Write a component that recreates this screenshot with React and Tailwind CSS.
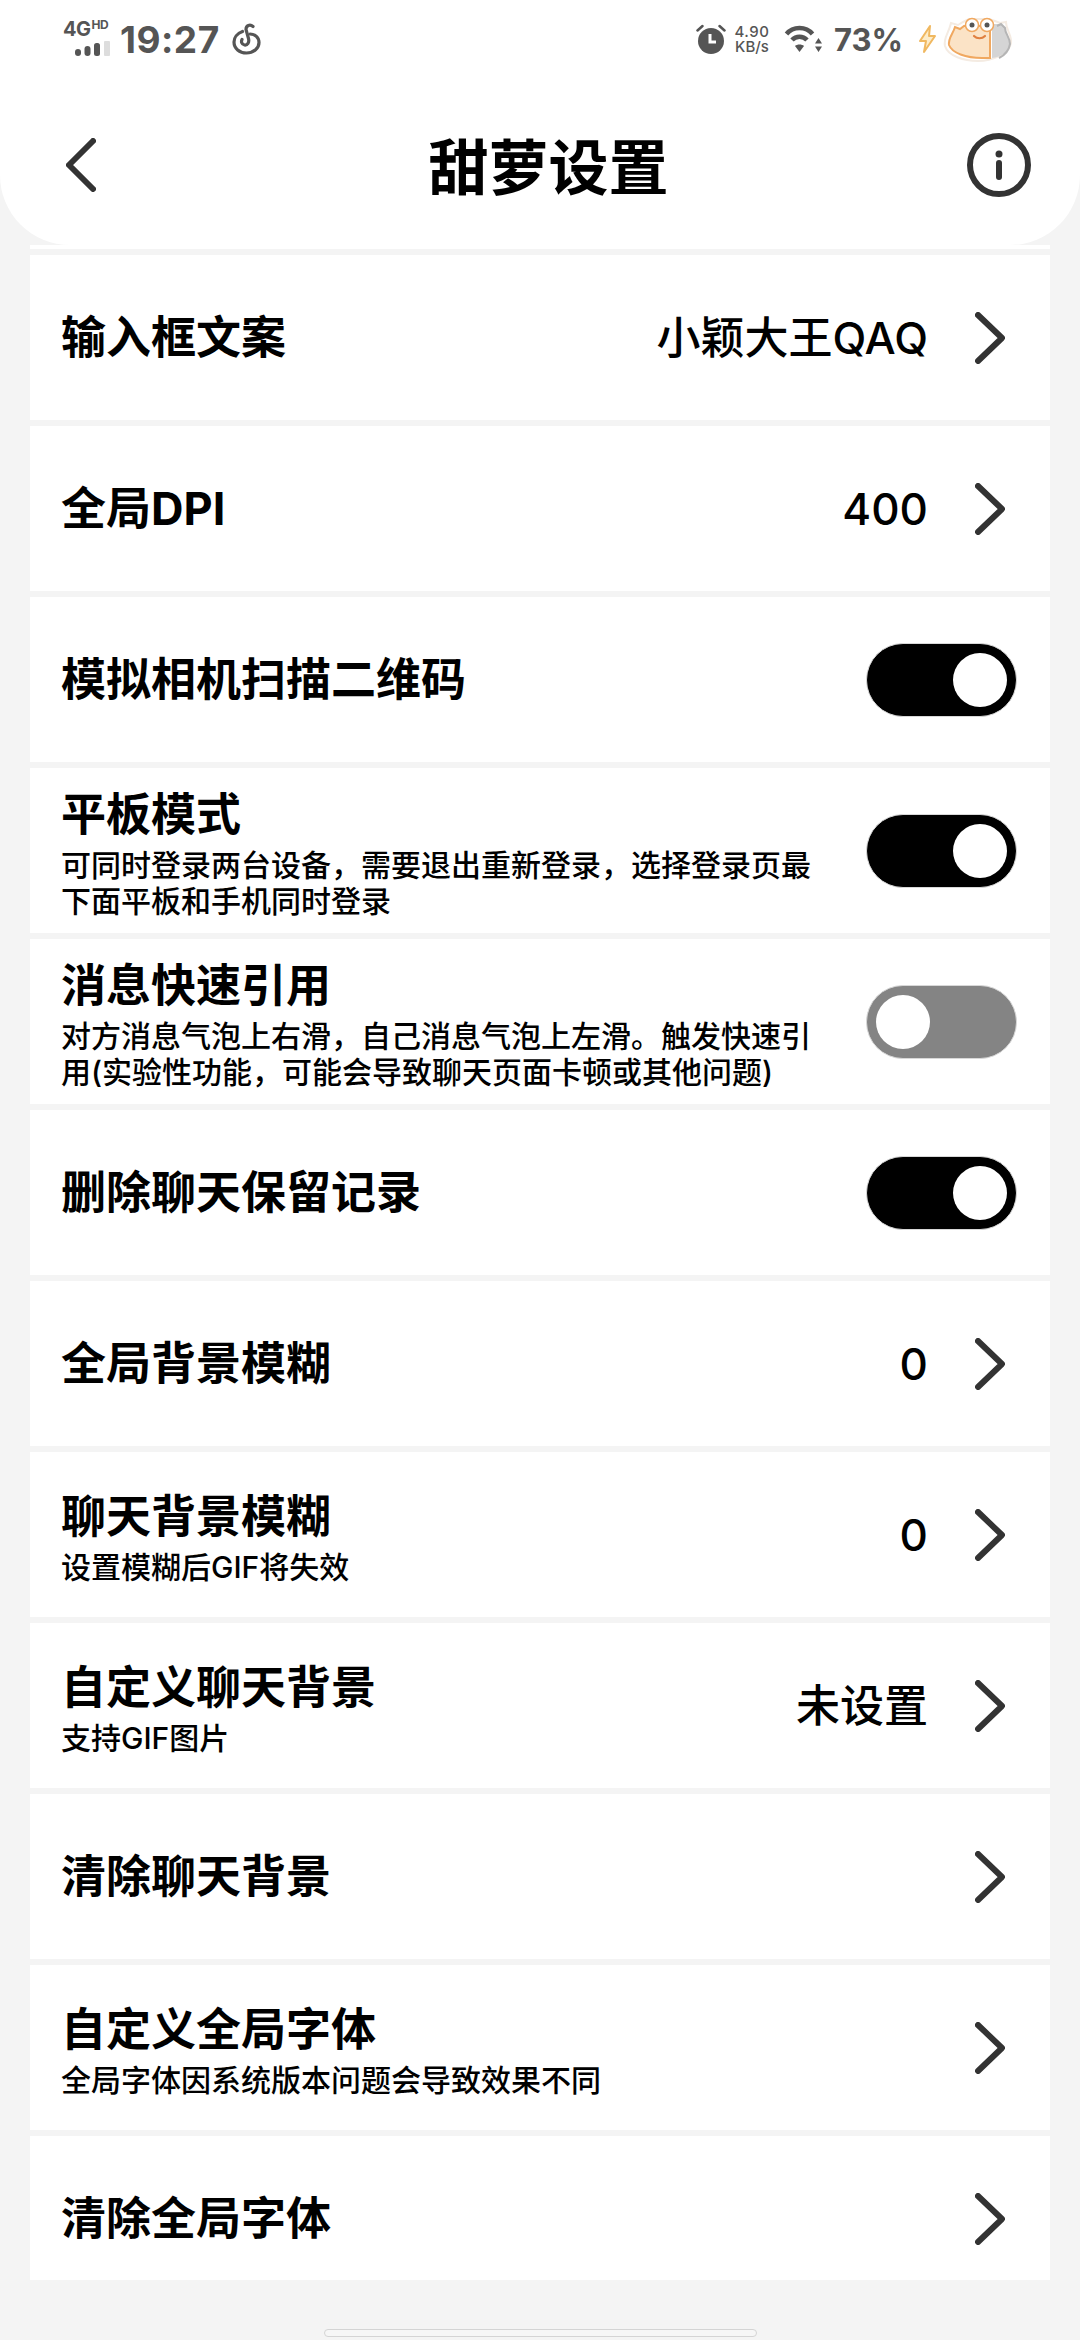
const font = "font-['Inter','Noto_Sans_CJK_SC','Noto_Sans',sans-serif]";

const rows = [
  { title: "输入框文案", value: "小颖大王QAQ" },
  { title: "全局DPI", value: "400" },
  { title: "模拟相机扫描二维码", toggle: true },
  { title: "平板模式", sub: "可同时登录两台设备，需要退出重新登录，选择登录页最下面平板和手机同时登录", toggle: true },
  { title: "消息快速引用", sub: "对方消息气泡上右滑，自己消息气泡上左滑。触发快速引用(实验性功能，可能会导致聊天页面卡顿或其他问题)", toggle: false },
  { title: "删除聊天保留记录", toggle: true },
  { title: "全局背景模糊", value: "0" },
  { title: "聊天背景模糊", sub: "设置模糊后GIF将失效", value: "0" },
  { title: "自定义聊天背景", sub: "支持GIF图片", value: "未设置" },
  { title: "清除聊天背景" },
  { title: "自定义全局字体", sub: "全局字体因系统版本问题会导致效果不同" },
  { title: "清除全局字体" },
];

function Toggle({ on }) {
  return (
    <div
      className={`flex h-[74px] w-[151px] items-center rounded-full border border-[#d8d8d8] px-[9px] ${
        on ? "justify-end bg-black" : "justify-start bg-[#848484]"
      }`}
    >
      <div className="h-[54px] w-[54px] rounded-full bg-white" />
    </div>
  );
}

function Chevron() {
  return (
    <svg className="ml-[47px] mr-[12px] shrink-0" width="30" height="52" viewBox="0 0 30 52" fill="none" stroke="#333" strokeWidth="6" strokeLinecap="round" strokeLinejoin="round">
      <path d="M3 3 27 26 3 49" />
    </svg>
  );
}

function Row({ row }) {
  const hasToggle = row.toggle !== undefined;
  return (
    <div className="mb-[6px] flex h-[165px] shrink-0 items-center bg-white pl-[31px] pr-[33px]">
      <div className="min-w-0 flex-1">
        <div className="text-[45px] font-bold leading-[65px] text-black">{row.title}</div>
        {row.sub && <div className="w-[760px] text-[30px] font-medium leading-[36px] text-black">{row.sub}</div>}
      </div>
      {row.value && <div className="ml-4 text-[44px] font-medium text-black">{row.value}</div>}
      {hasToggle ? <Toggle on={row.toggle} /> : <Chevron />}
    </div>
  );
}

function StatusBar() {
  return (
    <div className="flex h-[78px] items-center justify-between pl-[63px] pr-[62px] text-[#555]">
      <div className="flex items-center">
        <div className="relative h-[34px] w-[47px]">
          <div className="absolute left-0 top-[-4px] text-[20px] font-bold leading-[22px] tracking-[-0.5px]">
            4G<span className="ml-[1px] align-top text-[12px] leading-[14px]">HD</span>
          </div>
          <svg className="absolute bottom-0 left-[12px]" width="35" height="15" viewBox="0 0 35 15">
            <rect x="0" y="8" width="6" height="7" rx="3" fill="#555" />
            <rect x="9.5" y="5" width="6" height="10" rx="3" fill="#555" />
            <rect x="19" y="2" width="6" height="13" rx="2.5" fill="#555" />
            <rect x="29" y="0" width="6" height="15" rx="1" fill="#ddd" />
          </svg>
        </div>
        <span className="ml-[10px] text-[37px] font-bold leading-none tracking-[0.5px]">19:27</span>
        <svg className="ml-[12px]" width="30" height="32" viewBox="0 0 30 32" fill="none" stroke="#555" strokeWidth="3.2" strokeLinecap="round">
          <path d="M10.5 8.5C5 10.5 2 15 2 19c0 6.5 5.5 11 12.5 11C22 30 27 25 27 19.5c0-5-4-8.5-9-8.5" />
          <path d="M21 3.5C18 1 14 2.5 14 6.5l2.5 9c1 4-1 7-4 6.5-3-.5-3.5-3.5-2.5-5.5" />
        </svg>
      </div>
      <div className="flex items-center">
        <svg width="30" height="30" viewBox="0 0 30 30">
          <path d="M1.5 6.5 6.5 2M28.5 6.5 23.5 2" stroke="#555" strokeWidth="2.5" strokeLinecap="round" />
          <circle cx="15" cy="17" r="13" fill="#555" />
          <path d="M14 10v8h6" fill="none" stroke="#fff" strokeWidth="3" />
        </svg>
        <div className="ml-[6px] flex w-[40px] flex-col items-center text-[15px] font-medium leading-[15px]">
          <span className="tracking-[0.5px]">4.90</span>
          <span>KB/s</span>
        </div>
        <svg className="ml-[12px]" width="38" height="30" viewBox="0 0 38 30" fill="none" stroke="#555">
          <path d="M2.5 10C9 2 22 2 28.5 10" strokeWidth="4.5" />
          <path d="M8 16c4-4.500 11-4.500 15 0" strokeWidth="4.5" />
          <path d="M11 22c2-2 7-2 9 0l-4.500 6z" fill="#555" stroke="none" />
          <path d="M34.500 14l3.500 5.500h-7zM34.500 28l3.500-5.500h-7z" fill="#555" stroke="none" />
        </svg>
        <span className="ml-[12px] text-[31px] font-bold leading-none">73%</span>
        <svg className="ml-[15px]" width="20" height="30" viewBox="0 0 20 30" fill="#fdecc8" stroke="#f0b860" strokeWidth="2" strokeLinejoin="round">
          <path d="M12 2 2 17h6l-2 11 11-16h-6z" />
        </svg>
        <svg className="ml-[4px]" width="76" height="48" viewBox="0 0 76 48">
          <path d="M3 31C1 23 7 18 9 8l7 2 5-3 6-3h20l6 2 5 2 6-1c0 8 6 13 5 21-2 11-19 18-33 18S6 41 3 31z" fill="#fff" stroke="#f4ebe2" strokeWidth="2" />
          <path d="M7 30c-1-7 4-11 6-18l5 2 4-3h26v32H40C24 43 10 38 7 30z" fill="#fbe3c6" stroke="#f0a860" strokeWidth="2" />
          <path d="M50 9h9l4 4c0 6 5 9 5 16-1 8-9 13-18 14z" fill="#d5d5d5" />
          <path d="M57 43c6-3 10-8 11-14 0-7-5-10-5-16l-4-4-4 2" fill="none" stroke="#b5b5b5" strokeWidth="2" />
          <circle cx="30" cy="10" r="6.500" fill="#fff" stroke="#f0a860" strokeWidth="1.500" />
          <circle cx="45" cy="10" r="6.500" fill="#fff" stroke="#f0a860" strokeWidth="1.500" />
          <circle cx="30" cy="10" r="2.500" fill="#555" />
          <circle cx="45" cy="10" r="2.500" fill="#555" />
          <path d="M32 21c3 3 8 3 11 0" fill="none" stroke="#e08040" strokeWidth="2.200" strokeLinecap="round" />
        </svg>
      </div>
    </div>
  );
}

export default function App() {
  return (
    <div className={`flex h-[2340px] w-[1080px] flex-col overflow-hidden bg-[#f4f4f4] ${font}`}>
      <header className="h-[245px] shrink-0 rounded-b-[70px] bg-white">
        <StatusBar />
        <div className="grid h-[167px] grid-cols-[1fr_auto_1fr] items-center pl-[66px] pr-[49px] pt-[7px]">
          <svg width="30" height="54" viewBox="0 0 30 54" fill="none" stroke="#333" strokeWidth="6" strokeLinecap="round" strokeLinejoin="round">
            <path d="M27 3 3 27 27 51" />
          </svg>
          <h1 className="mt-[6px] text-[60px] font-bold leading-none text-black">甜萝设置</h1>
          <svg className="justify-self-end" width="64" height="64" viewBox="0 0 64 64" fill="none" stroke="#333" strokeWidth="6" strokeLinecap="round">
            <circle cx="32" cy="32" r="29" />
            <path d="M32 30v14" />
            <circle cx="32" cy="21" r="3.500" fill="#333" stroke="none" />
          </svg>
        </div>
      </header>
      <div className="mx-[30px] h-[4px] shrink-0 bg-white" />
      <div className="mx-[30px] mt-[6px] flex h-[2025px] shrink-0 flex-col overflow-hidden">
        {rows.map((row) => (
          <Row key={row.title} row={row} />
        ))}
      </div>
      <div className="mx-auto mt-[49px] h-[8px] w-[433px] shrink-0 rounded-full border border-[#d4d4d4] bg-[#f6f6f6]" />
    </div>
  );
}
